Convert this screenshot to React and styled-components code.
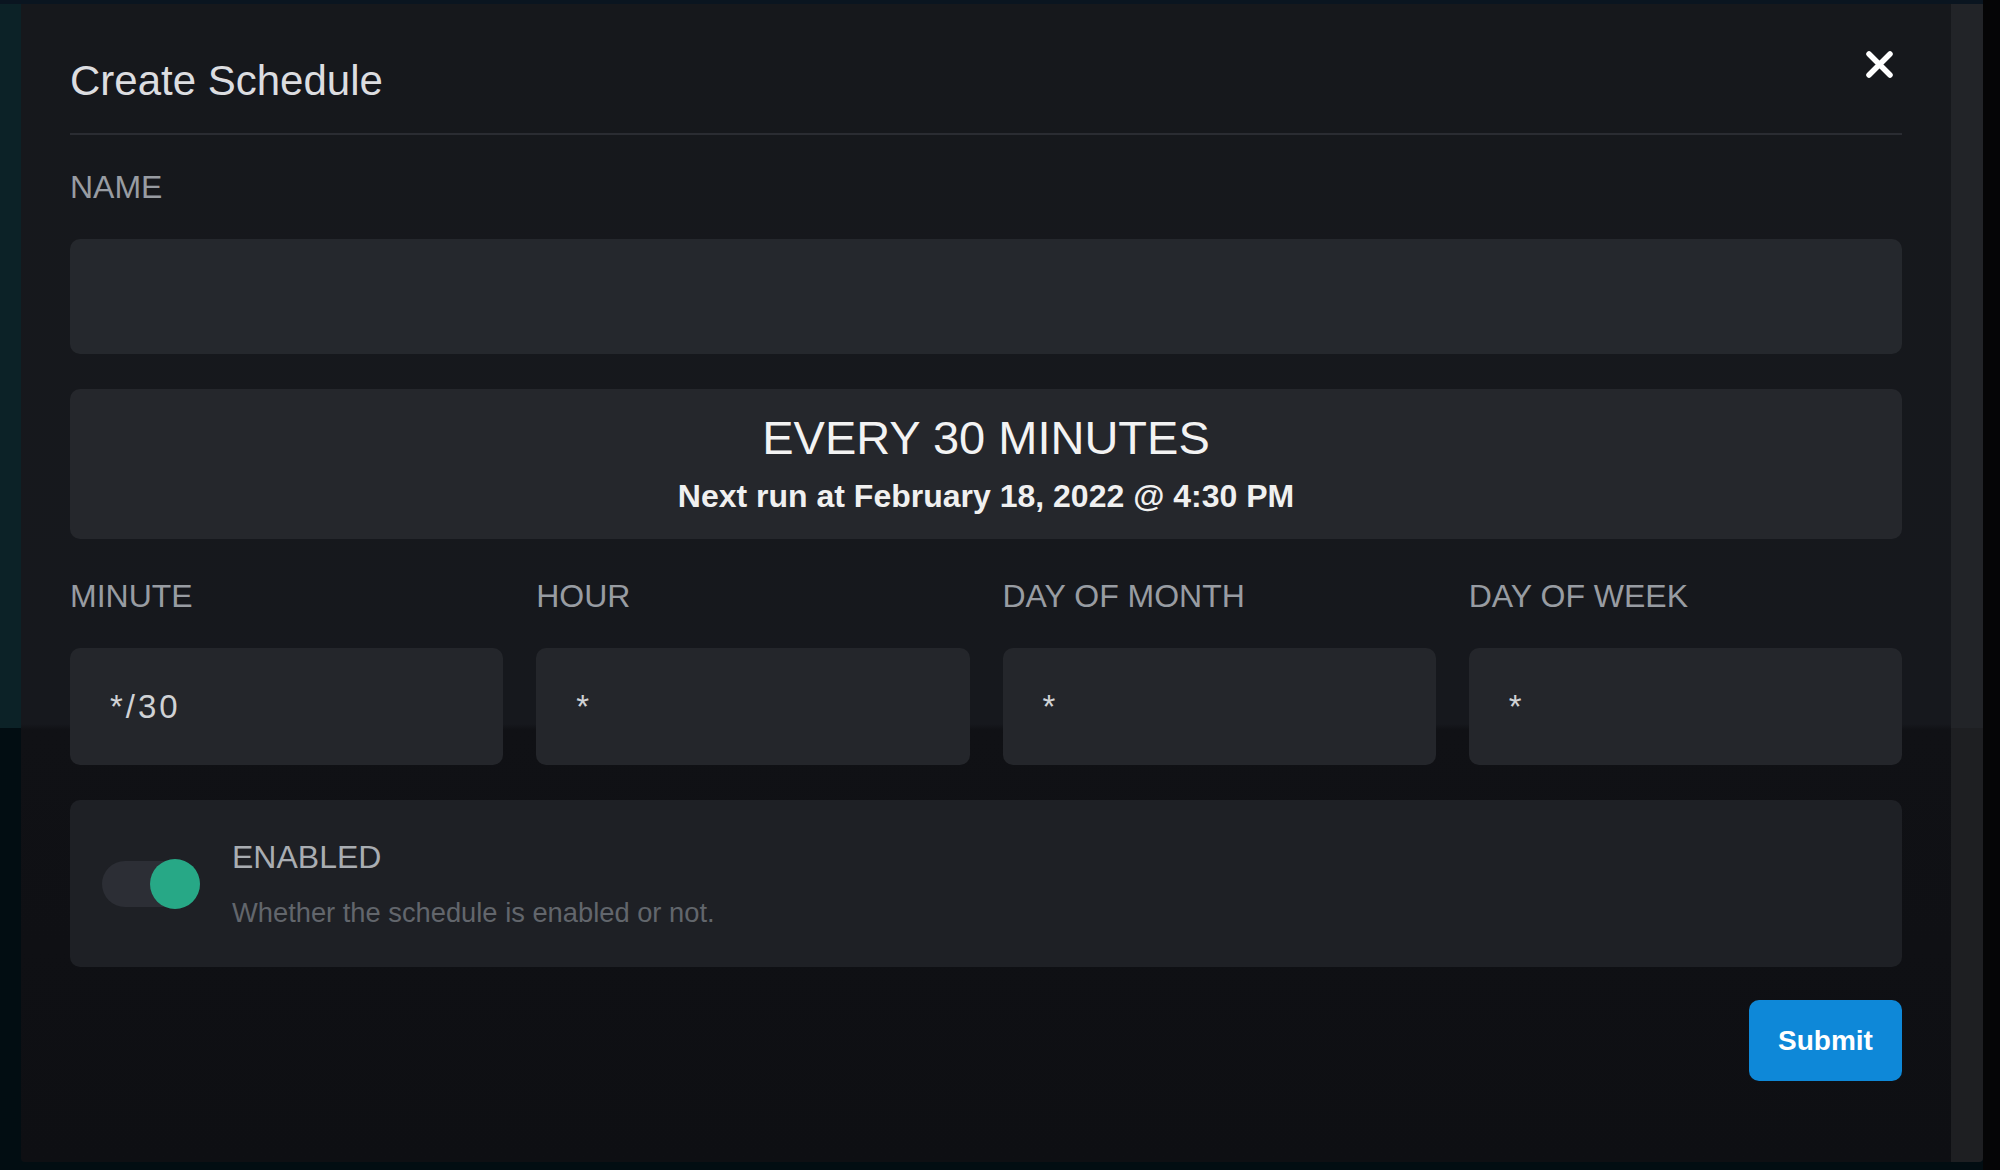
import React from "react";
import styled, { createGlobalStyle } from "styled-components";

const Global = createGlobalStyle`
  html, body { margin: 0; padding: 0; }
  body {
    width: 2000px;
    height: 1170px;
    overflow: hidden;
    font-family: "Liberation Sans", Arial, sans-serif;
    background:
      linear-gradient(to right, transparent 1983px, #050506 1983px),
      linear-gradient(to bottom, #0a1520 0, #0a1520 4px, #0c2227 4px, #0c2227 728px, #020d12 728px);
  }
  * { box-sizing: border-box; }
`;

const Page = styled.div`
  padding: 4px 17px 8px 21px;
  height: 1170px;
`;

const Modal = styled.div`
  width: 1962px;
  height: 1158px;
  display: flex;
  border-radius: 0 0 4px 4px;
  overflow: hidden;
`;

const Panel = styled.div`
  position: relative;
  flex: 1;
  padding: 0 49px;
  display: flex;
  flex-direction: column;
  background: linear-gradient(
    to bottom,
    #16181c 0,
    #16181d 720px,
    #101115 726px,
    #0e0f13 100%
  );
`;

const ScrollTrack = styled.div`
  width: 32px;
  background: linear-gradient(to bottom, #222428 0, #222428 724px, #1e1f22 724px);
`;

const Header = styled.div`
  padding-top: 56px;
  padding-bottom: 31px;
  border-bottom: 2px solid #2a2c32;
`;

const Title = styled.h2`
  margin: 0;
  font-size: 42px;
  line-height: 42px;
  font-weight: 400;
  color: #dcdde0;
`;

const CloseButton = styled.button`
  position: absolute;
  top: 46px;
  right: 57px;
  width: 29px;
  height: 29px;
  padding: 0;
  border: 0;
  background: transparent;
  display: flex;
  align-items: center;
  justify-content: center;
  cursor: pointer;
`;

const Label = styled.label`
  display: block;
  font-size: 32px;
  line-height: 32px;
  color: #989ca2;
  text-transform: uppercase;
  margin-bottom: 36px;
`;

const Field = styled.div`
  display: flex;
  flex-direction: column;
  margin-top: ${(p) => p.$top || 0}px;
`;

const Input = styled.div`
  height: ${(p) => p.$h || 115}px;
  border-radius: 10px;
  background: ${(p) => p.$bg || "#25282d"};
  display: flex;
  align-items: center;
  padding-left: 40px;
  font-size: 33px;
  letter-spacing: 3px;
  color: #d0d2d5;
`;

const Summary = styled.div`
  margin-top: 35px;
  height: 150px;
  border-radius: 10px;
  background: #25272c;
  display: flex;
  flex-direction: column;
  align-items: center;
  justify-content: center;
  gap: 17px;
`;

const SummaryTitle = styled.div`
  font-size: 47px;
  line-height: 46px;
  color: #f3f3f3;
  text-transform: uppercase;
`;

const SummaryNext = styled.div`
  font-size: 32px;
  line-height: 36px;
  font-weight: 700;
  color: #f0f0f0;
`;

const CronGrid = styled.div`
  margin-top: 41px;
  display: grid;
  grid-template-columns: repeat(4, 1fr);
  column-gap: 33px;
`;

const ToggleCard = styled.div`
  margin-top: 35px;
  height: 167px;
  border-radius: 10px;
  background: #1e2025;
  display: flex;
  align-items: center;
  padding-left: 32px;
  gap: 32px;
`;

const Track = styled.div`
  position: relative;
  width: 98px;
  height: 46px;
  border-radius: 23px;
  background: #2c2e35;
  flex-shrink: 0;
`;

const Knob = styled.div`
  position: absolute;
  right: 0;
  top: -2px;
  width: 50px;
  height: 50px;
  border-radius: 50%;
  background: #27a886;
`;

const ToggleText = styled.div`
  display: flex;
  flex-direction: column;
  gap: 25px;
  padding-top: 2px;
`;

const ToggleLabel = styled.div`
  font-size: 32px;
  line-height: 32px;
  color: #a9adb2;
  text-transform: uppercase;
`;

const ToggleDesc = styled.div`
  font-size: 27.3px;
  line-height: 30px;
  color: #62666c;
`;

const Footer = styled.div`
  margin-top: 33px;
  display: flex;
  justify-content: flex-end;
`;

const SubmitButton = styled.button`
  width: 153px;
  height: 81px;
  border: 0;
  border-radius: 10px;
  background: #0e88d8;
  color: #ffffff;
  font-family: "Liberation Sans", Arial, sans-serif;
  font-size: 28px;
  font-weight: 700;
  cursor: pointer;
`;

const cron = [
  { label: "Minute", value: "*/30" },
  { label: "Hour", value: "*" },
  { label: "Day of month", value: "*" },
  { label: "Day of week", value: "*" },
];

export default function App() {
  return (
    <>
      <Global />
      <Page>
        <Modal>
          <Panel>
            <CloseButton aria-label="Close">
              <svg width="29" height="29" viewBox="0 0 29 29">
                <path
                  d="M4 4 L25 25 M25 4 L4 25"
                  stroke="#ffffff"
                  strokeWidth="5.5"
                  strokeLinecap="round"
                />
              </svg>
            </CloseButton>
            <Header>
              <Title>Create Schedule</Title>
            </Header>
            <Field $top={36}>
              <Label>Name</Label>
              <Input $h={115} $bg="#25282d" />
            </Field>
            <Summary>
              <SummaryTitle>Every 30 minutes</SummaryTitle>
              <SummaryNext>Next run at February 18, 2022 @ 4:30 PM</SummaryNext>
            </Summary>
            <CronGrid>
              {cron.map((c) => (
                <Field key={c.label}>
                  <Label>{c.label}</Label>
                  <Input $h={117} $bg="#24262b">
                    {c.value}
                  </Input>
                </Field>
              ))}
            </CronGrid>
            <ToggleCard>
              <Track>
                <Knob />
              </Track>
              <ToggleText>
                <ToggleLabel>Enabled</ToggleLabel>
                <ToggleDesc>Whether the schedule is enabled or not.</ToggleDesc>
              </ToggleText>
            </ToggleCard>
            <Footer>
              <SubmitButton>Submit</SubmitButton>
            </Footer>
          </Panel>
          <ScrollTrack />
        </Modal>
      </Page>
    </>
  );
}
